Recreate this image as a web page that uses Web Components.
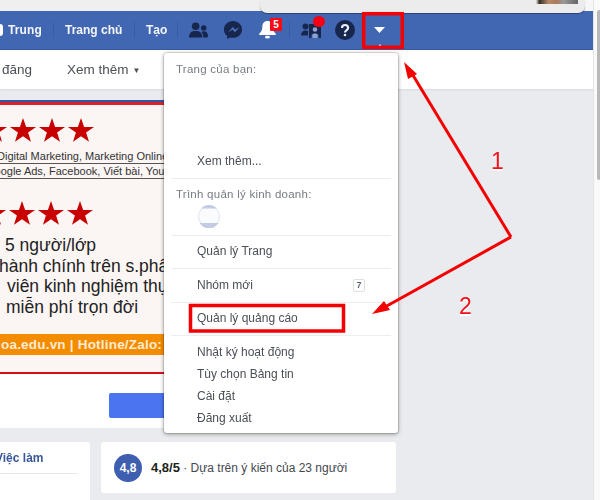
<!DOCTYPE html>
<html lang="vi"><head><meta charset="utf-8"><title>Facebook</title>
<style>
html,body{margin:0;height:500px;overflow:hidden;background:#e9ebee}
body{font-family:"Liberation Sans",Arial,sans-serif}
</style></head><body>
<fb-page>
  <fb-topstrip slot="top"></fb-topstrip>
  <fb-navbar slot="top"></fb-navbar>
  <fb-subnav slot="top"></fb-subnav>
  <fb-main slot="top"></fb-main>
  <fb-scrollbar slot="side"></fb-scrollbar>
  <fb-menu slot="over">
    <menu-group pad="6px 0 6px">
      <menu-label>Trang của bạn:</menu-label>
      <div style="height:71px"></div>
      <menu-item>Xem thêm...</menu-item>
    </menu-group>
    <menu-group pad="5px 0 6px">
      <menu-label>Trình quản lý kinh doanh:</menu-label>
      <biz-avatar></biz-avatar>
    </menu-group>
    <menu-group pad="4px 0 6px"><menu-item>Quản lý Trang</menu-item></menu-group>
    <menu-group pad="5px 0 6px"><menu-item count="7">Nhóm mới</menu-item></menu-group>
    <menu-group pad="4px 0 6px"><menu-item>Quản lý quảng cáo</menu-item></menu-group>
    <menu-group pad="5px 0 4px" last>
      <menu-item>Nhật ký hoạt động</menu-item>
      <menu-item>Tùy chọn Bảng tin</menu-item>
      <menu-item>Cài đặt</menu-item>
      <menu-item>Đăng xuất</menu-item>
    </menu-group>
  </fb-menu>
  <fb-annotations slot="over"></fb-annotations>
</fb-page>
<script>
function def(name, html, init){
  customElements.define(name, class extends HTMLElement{
    constructor(){super();this.attachShadow({mode:'open'}).innerHTML=html;}
    connectedCallback(){ if(init) init(this,this.shadowRoot); }
  });
}
const STAR='<svg width="26" height="24" viewBox="0 0 25 24" preserveAspectRatio="none"><path fill="#c80000" d="M12.500 0l3 8.900h9.500l-7.600 5.600 2.800 9.200-7.700-5.500-7.700 5.500 2.800-9.200L0 8.900h9.500z"/></svg>';

def('fb-page',`<style>
:host{display:grid;grid-template-columns:593px 7px;width:600px;height:500px;position:relative;overflow:hidden;filter:blur(.35px)}
.col{display:flex;flex-direction:column;min-width:0}
</style><div class="col"><slot name="top"></slot></div><slot name="side"></slot><slot name="over"></slot><slot></slot>`);

def('fb-topstrip',`<style>
:host{display:flex;height:11px;background:#efefef;position:relative}
.pop{width:325px;height:13px;margin-left:260px;background:#ececec;border-radius:0 0 7px 7px;box-shadow:0 1px 1px rgba(0,0,0,.35);z-index:3;display:flex;justify-content:flex-end}
.pic{width:42px;height:4px;margin-right:7px;background:linear-gradient(90deg,#f0e8da 0,#33302c 8%,#b58a66 30%,#a9795a 50%,#999 65%,#666 100%)}
.rest{flex:1;background:#f7f7f7}
</style><div class="pop"><div class="pic"></div></div><div class="rest"></div>`);

def('fb-navbar',`<style>
:host{display:flex;align-items:center;height:39px;background:#4267b2;box-sizing:border-box;border-bottom:1px solid #3a5aa0;color:#fff;font:bold 12px "Liberation Sans",Arial,sans-serif}
.av{width:3px;height:12px;background:#fff;border-radius:0 6px 6px 0;margin-right:5px}
.sep{width:1px;height:16px;background:#3b5ca3;flex:none}
.t{white-space:nowrap;flex:none;color:#f2f5fb}
.ic{position:relative;display:block;line-height:0;flex:none}
.badge{position:absolute;left:12px;top:-3px;width:12px;height:13px;background:#fa0a14;color:#fff;font:bold 10px/13px "Liberation Sans",Arial,sans-serif;text-align:center;border-radius:1px}
.dot{position:absolute;left:12px;top:-6px;width:12px;height:11px;border-radius:50%;background:#f40012}
svg{display:block}
</style>
<div class="av"></div><span class="t" style="width:32px;letter-spacing:.1px">Trung</span>
<div class="sep" style="margin:0 11px 0 13px"></div><span class="t" style="width:57px">Trang chủ</span>
<div class="sep" style="margin:0 11px 0 12px"></div><span class="t" style="width:20px">Tạo</span>
<div class="sep" style="margin:0 11px 0 11px"></div>
<span class="ic" style="margin-right:15px"><svg width="19" height="16" viewBox="0 0 20 16"><g fill="#17264d"><circle cx="7" cy="4" r="4"/><path d="M0 16c0-5 2.500-7 7-7s7 2 7 7z"/><circle cx="15.500" cy="6" r="2.900"/><path d="M15 16c0-2.500-.5-4.500-1.800-6 .7-.5 1.500-.7 2.300-.7 3 0 4.500 2 4.500 5.200 0 1-.5 1.500-1.500 1.500z"/></g></svg></span>
<span class="ic" style="margin-right:15px"><svg width="20" height="19" viewBox="0 0 20 21"><path fill="#17264d" d="M10 0C4.500 0 0 4.100 0 9.300c0 2.900 1.300 5.400 3.500 7.100V20l3.300-1.800c1 .3 2.100.4 3.200.4 5.500 0 10-4.100 10-9.300S15.500 0 10 0z"/><path fill="#4a6db5" d="M4.500 12.300l5.300-5.600 2.700 2.800 5-2.800-5.300 5.700-2.700-2.800z"/></svg></span>
<span class="ic" style="margin-right:12px"><svg width="19" height="18" viewBox="0 0 19 20"><path fill="#fff" d="M9.500 0C5.600 0 3.800 3 3.800 6.500c0 3.800-1.300 5.800-3.300 7.300-.6.500-.4 1.700.6 1.700h16.800c1 0 1.200-1.200.6-1.700-2-1.500-3.300-3.500-3.300-7.300C15.200 3 13.400 0 9.500 0z"/><ellipse cx="9.500" cy="18" rx="2.800" ry="1.500" fill="#fff"/></svg><span class="badge">5</span></span>
<div class="sep" style="margin-right:11px"></div>
<span class="ic" style="margin-right:14px"><svg width="20" height="16" viewBox="0 0 20 16"><g fill="#17264d"><circle cx="4.500" cy="4.500" r="3"/><path d="M0 13.500c0-3 1.500-5 4.500-5 1 0 1.800.2 2.500.6V13.500z"/><path d="M8 2h12v14h-2.500v-2.500c0-1.500-1-2-3.500-2s-3.500.5-3.500 2V16H8z"/></g><circle cx="14" cy="7.500" r="2.300" fill="#8ea2cf"/><path fill="#8ea2cf" d="M11.500 13.500c0-1.200.8-1.900 2.500-1.900s2.500.7 2.500 1.900V16h-5z"/></svg><span class="dot"></span></span>
<span class="ic" style="margin-right:19px"><svg width="20" height="20" viewBox="0 0 20 20"><circle cx="10" cy="10" r="10" fill="#17264d"/><path fill="none" stroke="#e9edf6" stroke-width="2.200" d="M7 8c0-1.900 1.200-3 3-3s3.100 1.100 3.100 2.700c0 1.300-.8 2-1.700 2.600-.9.600-1.400 1.100-1.400 2.300"/><circle cx="10" cy="15" r="1.300" fill="#e9edf6"/></svg></span>
<span class="ic" style="height:38px;display:flex;flex-direction:column;align-items:center;width:11px"><svg style="margin-top:16px" width="11" height="6" viewBox="0 0 12 6" preserveAspectRatio="none"><path d="M0 0h12L6 6z" fill="#fff"/></svg><svg style="margin-top:11px" width="4" height="3" viewBox="0 0 6 5" preserveAspectRatio="none"><path d="M3 0l3 5H0z" fill="#fff"/></svg></span>`);

def('fb-subnav',`<style>
:host{display:flex;align-items:center;height:39px;background:#fff;color:#4b4f56;font:13.500px "Liberation Sans",Arial,sans-serif;box-shadow:0 1px 2px rgba(0,0,0,.08);padding-left:2px}
span{white-space:nowrap}
.c{font-size:8px;margin-left:4px;position:relative;top:1px}
</style><span>đăng</span><span style="margin-left:35px">Xem thêm</span><span class="c">▼</span>`);

def('fb-main',`<style>
:host{display:flex;flex-direction:column;width:396px;padding-top:11px;gap:14px}
.cards{display:grid;grid-template-columns:90px 295px;gap:11px}
</style><fb-banner></fb-banner><div class="cards"><job-card></job-card><rating-card></rating-card></div>`);

def('fb-banner',`<style>
:host{display:block;background:#fff;height:328px;overflow:hidden;color:#222;font-family:"Liberation Sans",Arial,sans-serif}
.art{background:#fbf6f4;height:274px;border-top:2px solid #3455a8;box-sizing:border-box;position:relative;display:flex;flex-direction:column;border-bottom:2px solid #d60f14}
.rt{height:3px;background:#d8232a;flex:none}
.stars{display:flex;gap:3px;margin-left:-19px;flex:none;line-height:0}
.u{font-size:11px;line-height:15px;white-space:nowrap;height:14px;border-bottom:1px solid #555;color:#333;flex:none}
.b{font-size:17.500px;line-height:20.500px;white-space:nowrap;flex:none;color:#222}
.o{background:#f48c00;color:#fdebd3;font-weight:bold;font-size:13.500px;line-height:21px;height:21px;white-space:nowrap;letter-spacing:.2px;margin-top:17px;flex:none}
.btnrow{padding:19px 0 0 109px}
.btn{height:25px;width:178px;background:#4a74f0;border-radius:2px}
</style><div class="art"><div class="rt"></div>
<div class="stars" style="margin-top:13px">${STAR+STAR+STAR+STAR}</div>
<div class="u" style="margin-top:7px;text-indent:-3px">Digital Marketing, Marketing Online</div>
<div class="u" style="text-indent:-14px">Google Ads, Facebook, Viết bài, YouTube</div>
<div class="stars" style="margin-top:22px;margin-left:-20px">${STAR+STAR+STAR+STAR}</div>
<div class="b" style="margin-top:10px;padding-left:5px">5 người/lớp</div>
<div class="b" style="text-indent:-1px">hành chính trên s.phẩm</div>
<div class="b" style="padding-left:7px">viên kinh nghiệm thực</div>
<div class="b" style="padding-left:6px">miễn phí trọn đời</div>
<div class="o" style="text-indent:1px">oa.edu.vn | Hotline/Zalo: 0912</div>
</div><div class="btnrow"><div class="btn"></div></div>`);

def('job-card',`<style>
:host{display:block;background:#fff;border-radius:0 3px 0 0;height:70px;font:bold 12px "Liberation Sans",Arial,sans-serif;color:#385898}
.t{height:31px;line-height:32px;border-bottom:1px solid #e6e8eb;width:78px;white-space:nowrap;overflow:hidden;text-indent:-5px}
</style><div class="t">Việc làm</div>`);

def('rating-card',`<style>
:host{display:flex;align-items:center;gap:9px;background:#fff;border-radius:3px;height:51px;padding-left:13px;font:12px "Liberation Sans",Arial,sans-serif;color:#444950;white-space:nowrap}
.c{width:28px;height:28px;border-radius:50%;background:#3e5fb0;color:#fff;font:bold 12px/28px "Liberation Sans",Arial,sans-serif;text-align:center}
b{color:#1c1e21;font-size:13px}
</style><div class="c">4,8</div><div><b>4,8/5</b> · Dựa trên ý kiến của 23 người</div>`);

def('fb-scrollbar',`<style>
:host{display:block;background:#fafafa;height:500px;border-left:1px solid #e4e4e4;box-sizing:border-box}
.th{width:4px;height:170px;margin:10px 0 0 3px;background:#b9b9b9;border-radius:2px}
</style><div class="th"></div>`);

def('fb-menu',`<style>
:host{position:absolute;left:164px;top:53px;width:234px;background:#fff;border-radius:3px;box-shadow:0 0 0 1px rgba(0,0,0,.1),0 1px 4px rgba(0,0,0,.4);font:12px "Liberation Sans",Arial,sans-serif;color:#4b4f56;display:block;z-index:2}
</style><slot></slot>`);

def('menu-group',`<style>
:host{display:block;position:relative}
:host(:not([last]))::after{content:"";display:block;height:1px;background:#ebedf0;margin:0 7px}
</style><div class="p"><slot></slot></div>`,(el,s)=>{s.querySelector('.p').style.padding=el.getAttribute('pad')||'0';});

def('menu-label',`<style>
:host{display:block;height:20px;line-height:20px;padding-left:12px;color:#777b82;font-size:11.500px;letter-spacing:.25px;white-space:nowrap}
</style><slot></slot>`);

def('menu-item',`<style>
:host{display:flex;justify-content:space-between;align-items:center;height:22px;padding:0 33px 0 33px;white-space:nowrap;letter-spacing:0;color:#4b4f56}
.n{width:10px;height:11px;border:1px solid #dddfe2;border-radius:2px;font:bold 9px/11px "Liberation Sans",Arial,sans-serif;text-align:center;letter-spacing:0;color:#606770}
</style><span><slot></slot></span>`,(el,s)=>{const c=el.getAttribute('count');if(c&&!s.querySelector('.n')){const n=document.createElement('span');n.className='n';n.textContent=c;s.appendChild(n);}});

def('biz-avatar',`<style>
:host{display:block;height:25px;padding:1px 0 0 33px;box-sizing:border-box}
svg{display:block}
</style><svg width="24" height="23" viewBox="0 0 24 23"><circle cx="12" cy="11.500" r="10.500" fill="#fafbfd" stroke="#dfe3ef" stroke-width="1"/><path d="M4 3.500a11 11 0 0 1 16 0z" fill="#c3cce4"/><path d="M2.500 18a11 11 0 0 0 19 0z" fill="#c3cce4"/></svg>`);

def('fb-annotations',`<style>
:host{position:absolute;left:0;top:0;width:600px;height:500px;pointer-events:none;display:block;z-index:5}
svg{position:absolute;left:0;top:0}
.n{position:absolute;color:#f01218;font:23px/26px "Liberation Sans",Arial,sans-serif;text-shadow:0 2px 0 #fff,0 1px 1px #fff}
</style>
<svg width="600" height="500" viewBox="0 0 600 500">
<rect x="363.700" y="13.700" width="38.600" height="33.600" fill="none" stroke="#f40000" stroke-width="3.500"/>
<rect x="190.500" y="305.500" width="153" height="25.500" fill="none" stroke="#f40000" stroke-width="3.500"/>
<path d="M511 237L411 72" stroke="#f40000" stroke-width="3" fill="none"/>
<path d="M511 237L385 307" stroke="#f40000" stroke-width="3" fill="none"/>
<path d="M404 62L417 74 408 79z" fill="#f40000"/>
<path d="M372 314L384 301 390 310z" fill="#f40000"/>
</svg>
<span class="n" style="left:491px;top:148px">1</span>
<span class="n" style="left:459px;top:293px">2</span>`);
</script>
</body></html>
